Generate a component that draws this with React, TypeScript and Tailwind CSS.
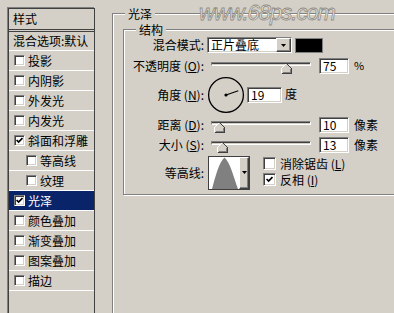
import React from "react";

const sunken =
  "border border-t-[#808080] border-l-[#808080] border-b-white border-r-white shadow-[inset_1px_1px_0_#404040,inset_-1px_-1px_0_#d4d0c8]";
const raised =
  "border border-t-white border-l-white border-b-[#404040] border-r-[#404040] shadow-[inset_-1px_-1px_0_#808080]";

function Check({ checked = false, big = false }: { checked?: boolean; big?: boolean }) {
  return (
    <span
      className={`${big ? "w-[13px] h-[13px]" : "w-[11px] h-[11px]"} shrink-0 flex items-center justify-center bg-white ${sunken}`}
    >
      {checked && (
        <svg width="7" height="7" viewBox="0 0 7 7">
          <path d="M0.6 3 L2.6 5 L6.5 1" fill="none" stroke="#000" strokeWidth="1.7" />
        </svg>
      )}
    </span>
  );
}

function Arrow() {
  return (
    <svg width="5" height="3" viewBox="0 0 5 3">
      <path d="M0 0 H5 L2.5 3 Z" fill="#000" />
    </svg>
  );
}

function Thumb() {
  return (
    <svg width="11" height="11" viewBox="0 0 11 11" shapeRendering="crispEdges">
      <polygon points="5.5,0.5 10.5,5.5 10.5,10.5 0.5,10.5 0.5,5.5" fill="#d4d0c8" />
      <polyline points="0.5,10 0.5,5.5 5.5,0.5" fill="none" stroke="#fff" />
      <polyline points="5.5,0.5 10.5,5.5 10.5,10.5 0.5,10.5" fill="none" stroke="#404040" />
      <polyline points="9.5,6 9.5,9.5 1.5,9.5" fill="none" stroke="#808080" />
    </svg>
  );
}

function Slider({ pos }: { pos: number }) {
  return (
    <div className="relative w-[100px] h-[17px] shrink-0">
      <div className="absolute left-0 right-0 top-[5px] h-[4px] bg-[#d4d0c8] border border-t-[#808080] border-l-[#808080] border-b-white border-r-white shadow-[inset_0_1px_0_#404040]" />
      <div className="absolute top-[6px]" style={{ left: pos - 5 }}>
        <Thumb />
      </div>
    </div>
  );
}

function Field({ value, w }: { value: string; w: string }) {
  return (
    <div className={`${w} h-[16px] shrink-0 bg-white ${sunken} pl-[3px] flex items-center`}>
      {value}
    </div>
  );
}

function Label({ children }: { children: React.ReactNode }) {
  return <div className="w-[80px] shrink-0 text-right whitespace-nowrap">{children}</div>;
}

const listItems: { t: string; c?: boolean; indent?: boolean; sel?: boolean }[] = [
  { t: "投影" },
  { t: "内阴影" },
  { t: "外发光" },
  { t: "内发光" },
  { t: "斜面和浮雕", c: true },
  { t: "等高线", indent: true },
  { t: "纹理", indent: true },
  { t: "光泽", c: true, sel: true },
  { t: "颜色叠加" },
  { t: "渐变叠加" },
  { t: "图案叠加" },
  { t: "描边" },
];

function LeftPanel() {
  return (
    <div className="mt-[8px] ml-[8px] w-[87px] h-[330px] shrink-0 border-l border-t border-r border-[#404040] shadow-[-1px_-1px_0_#808080] flex flex-col overflow-hidden">
      <div className="h-[20px] pl-[4px] flex items-center">样式</div>
      <div className="h-[3px] border-t border-b border-[#404040]" />
      <div className="h-[18px] pl-[4px] flex items-center whitespace-nowrap">混合选项:默认</div>
      <div className="h-px bg-white" />
      {listItems.map((it) => (
        <React.Fragment key={it.t}>
          <div
            className={`h-[19px] flex items-center gap-[3px] whitespace-nowrap ${it.indent ? "pl-[17px]" : "pl-[5px]"} ${
              it.sel ? "bg-[#0a246a] text-white" : ""
            }`}
          >
            <Check checked={it.c} />
            <span>{it.t}</span>
          </div>
          <div className="h-px bg-white" />
        </React.Fragment>
      ))}
    </div>
  );
}

function Dial() {
  return (
    <svg width="38" height="38" viewBox="0 0 38 38" className="shrink-0">
      <circle cx="19" cy="19" r="17.4" fill="none" stroke="#000" strokeWidth="1.3" />
      <line x1="19" y1="19" x2="31.3" y2="14.8" stroke="#000" strokeWidth="1.1" />
      <circle cx="19" cy="19" r="1.6" fill="#000" />
    </svg>
  );
}

function Contour() {
  return (
    <div className="ml-[4px] w-[42px] h-[34px] shrink-0 flex border border-[#404040] bg-white">
      <div className="w-[30px] h-full">
        <svg width="30" height="32" viewBox="0 0 30 32">
          <path d="M3 32 C6 21 10 5 15.5 0.5 C21 5 25 21 29 32 Z" fill="#808080" />
        </svg>
      </div>
      <div className={`w-[10px] h-full bg-[#d4d0c8] ${raised} flex items-center justify-center`}>
        <Arrow />
      </div>
    </div>
  );
}

function Structure() {
  return (
    <div className="relative mt-[15px] ml-[10px] w-[290px] h-[166px] border border-[#808080] shadow-[inset_1px_1px_0_#fff,1px_1px_0_#fff] flex flex-col">
      <span className="absolute left-[12px] top-[-7px] px-[3px] bg-[#d4d0c8] leading-[13px]">结构</span>

      {/* 混合模式 */}
      <div className="mt-[7px] h-[16px] flex items-center">
        <Label>混合模式:</Label>
        <div className={`ml-[3px] w-[85px] h-[16px] flex bg-white ${sunken}`}>
          <span className="flex-1 pl-[3px] flex items-center whitespace-nowrap">正片叠底</span>
          <span className={`w-[15px] h-full bg-[#d4d0c8] ${raised} flex items-center justify-center`}>
            <Arrow />
          </span>
        </div>
        <div className="ml-[3px] w-[28px] h-[15px] bg-black border border-[#808080]" />
      </div>

      {/* 不透明度 */}
      <div className="mt-[4px] h-[17px] flex items-center">
        <Label>
          不透明度 (<span className="underline">O</span>):
        </Label>
        <div className="ml-[7px]">
          <Slider pos={75} />
        </div>
        <div className="ml-[8px]">
          <Field value="75" w="w-[30px]" />
        </div>
        <span className="ml-[5px] self-start mt-[2px] text-[11px]">%</span>
      </div>

      {/* 角度 */}
      <div className="mt-[2px] h-[38px] flex items-center">
        <Label>
          角度 (<span className="underline">N</span>):
        </Label>
        <div className="ml-[3px]">
          <Dial />
        </div>
        <div className="ml-[2px]">
          <Field value="19" w="w-[35px]" />
        </div>
        <span className="ml-[3px] -mt-[3px]">度</span>
      </div>

      {/* 距离 */}
      <div className="mt-[2px] h-[17px] flex items-center">
        <Label>
          距离 (<span className="underline">D</span>):
        </Label>
        <div className="ml-[7px]">
          <Slider pos={8} />
        </div>
        <div className="ml-[8px]">
          <Field value="10" w="w-[30px]" />
        </div>
        <span className="ml-[5px]">像素</span>
      </div>

      {/* 大小 */}
      <div className="mt-[3px] h-[17px] flex items-center">
        <Label>
          大小 (<span className="underline">S</span>):
        </Label>
        <div className="ml-[7px]">
          <Slider pos={11} />
        </div>
        <div className="ml-[8px]">
          <Field value="13" w="w-[30px]" />
        </div>
        <span className="ml-[5px]">像素</span>
      </div>

      {/* 等高线 */}
      <div className="mt-[2px] h-[35px] flex items-center">
        <Label>等高线:</Label>
        <Contour />
        <div className="ml-[13px] flex flex-col gap-[3px] -mt-[2px]">
          <div className="flex items-center gap-[4px] whitespace-nowrap">
            <Check big />
            <span>
              消除锯齿 (<span className="underline">L</span>)
            </span>
          </div>
          <div className="flex items-center gap-[4px] whitespace-nowrap">
            <Check big checked />
            <span>
              反相 (<span className="underline">I</span>)
            </span>
          </div>
        </div>
      </div>
    </div>
  );
}

function OuterGroup() {
  return (
    <div className="relative mt-[13px] ml-[17px] w-[300px] h-[330px] shrink-0 border border-[#808080] shadow-[inset_1px_1px_0_#fff,1px_1px_0_#fff]">
      <span className="absolute left-[12px] top-[-7px] px-[3px] bg-[#d4d0c8] leading-[13px]">光泽</span>
      <Structure />
    </div>
  );
}

export default function App() {
  return (
    <div className="relative w-[394px] h-[313px] overflow-hidden bg-[#d4d0c8] flex items-start text-[12px] leading-[12px] text-black font-['Noto_Sans_CJK_SC','Liberation_Sans',sans-serif]">
      <LeftPanel />
      <OuterGroup />
      <div className="absolute left-[199px] top-[1px] italic text-[22px] leading-[24px] tracking-[-1px] text-[#ebe7df] font-['Liberation_Sans',sans-serif] [-webkit-text-stroke:0.8px_#8f8b83] whitespace-nowrap">
        www.68ps.com
      </div>
    </div>
  );
}
